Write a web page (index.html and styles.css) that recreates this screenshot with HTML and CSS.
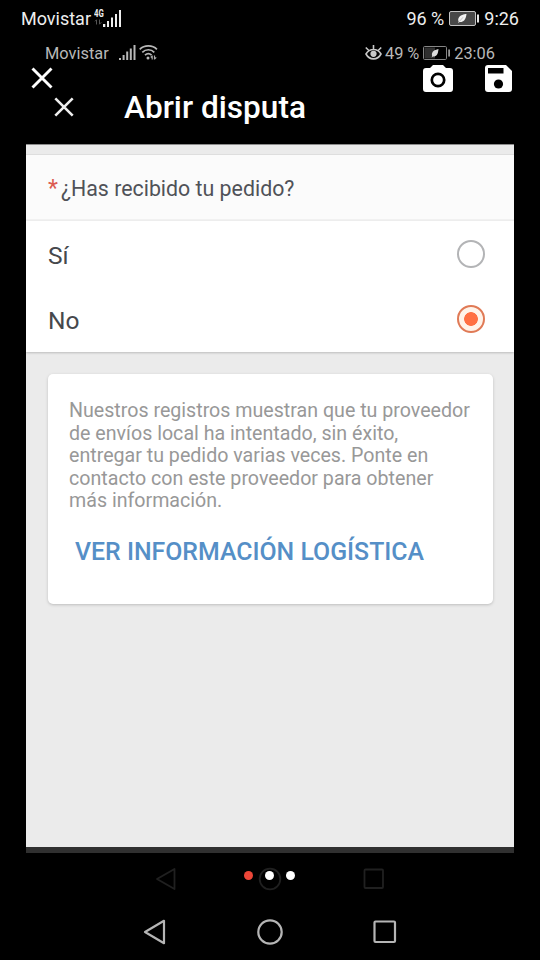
FILE: index.html
```html
<!DOCTYPE html>
<html lang="es">
<head>
<meta charset="utf-8">
<meta name="viewport" content="width=device-width, initial-scale=1">
<title>Abrir disputa</title>
<link rel="stylesheet" href="styles.css">
</head>
<body>
<div class="phone">
  <header class="status">
    <span class="carrier">Movistar</span>
    <span class="network"><b>4G</b><svg width="9" height="6" viewBox="0 0 9 6"><path d="M2.500 5.500V.8M1 2.300 2.500.8M5.500.5v4.700M5.500 5.200 7.300 3.300" fill="none" stroke="#555"/></svg></span>
    <svg class="signal" width="18" height="17" viewBox="0 0 18 17"><path d="M0 14h2.300v3H0zM4 11h2v6H4zM8 7.500h2V17H8zM12 4h2v13h-2zM16 0h2v17h-2z" fill="#eee"/></svg>
    <span class="percent">96 %</span>
    <svg class="battery" width="30" height="15" viewBox="0 0 30 15"><rect x=".5" y=".5" width="26" height="14" rx="1.500" fill="#484848" stroke="#c4c4c4"/><path d="M28 3.500h2v8h-2z" fill="#e5e5e5"/><path d="M17.500 3c-2 0-7 1-8 4.300-.6 1.500-.3 2.500.2 3L9 12l1.600-1c3.500.4 6.200-1.800 6.900-8z" fill="#f2f2f2"/><path d="m10.500 10.300 3.500-4" stroke="#888" stroke-width=".5"/></svg>
    <span class="clock">9:26</span>
  </header>

  <main class="shot">
    <div class="shot-status">
      <span class="carrier">Movistar</span>
      <svg class="signal" width="17" height="15" viewBox="0 0 17 15"><path d="M0 13h2v2H0zM3.600 10h2v5h-2zM7.200 6.500h2V15h-2zM10.800 3.500h2V15h-2zM14.500 0h2v15h-2z" fill="#b8b8b8"/></svg>
      <svg class="wifi" width="19" height="15" viewBox="0 0 19 15"><g fill="none" stroke="#b8b8b8" stroke-width="1.700"><path d="M.7 4.400c4.600-4.600 12.800-4.600 17.200 0M3.300 7.300c3.400-3.400 8.800-3.400 12 0M6 10.200c2-2 4.600-2 6.600 0"/></g><circle cx="9" cy="13" r="1.500" fill="#b8b8b8"/><path d="M13.200 14.500v-4m-1.400 2 1.400-1.700M15.500 10.500v4m0-.3 1.700-1.900" fill="none" stroke="#aaa" stroke-width="1.200"/></svg>
      <svg class="eye" width="17" height="15" viewBox="0 0 17 15"><g fill="none" stroke="#c8c8c8" stroke-width="1.600"><path d="M1 9c3.500-6 11.500-6 15 0-3.500 6.500-11.500 6.500-15 0zM8.500 4V0M3.800 5.500.8 2.500M13.200 5.500l3-3"/></g><circle cx="8.500" cy="8.800" r="3.100" fill="#c8c8c8"/></svg>
      <span class="percent">49 %</span>
      <svg class="battery" width="27" height="14" viewBox="0 0 27 14"><rect x=".5" y=".5" width="23" height="13" rx="1.200" fill="#000" stroke="#858585"/><path d="M1.500 1.500H12v11H1.500z" fill="#303030"/><path d="M25.300 3.500h1.600v7h-1.600z" fill="#aaa"/><path d="M15.500 3C12 3.800 9.500 5 9 7.500c-.2 1 0 2 .2 2.400L8.500 11.500l1.500-1c3.500.2 5-2 5.500-7.500z" fill="#ddd"/></svg>
      <span class="clock">23:06</span>
    </div>
    <div class="titlebar">
      <svg width="20" height="20" viewBox="0 0 20 20"><path d="m1.300 1.300 17.400 17.400M18.700 1.300 1.300 18.700" stroke="#eee" stroke-width="2.600"/></svg>
      <h1>Abrir disputa</h1>
    </div>
    <section class="content">
      <div class="question"><span class="required">*</span><span>¿Has recibido tu pedido?</span></div>
      <div class="options">
        <div class="option"><span>Sí</span><i class="radio"></i></div>
        <div class="option"><span>No</span><i class="radio checked"></i></div>
      </div>
      <article class="card">
        <p>Nuestros registros muestran que tu proveedor<br>de envíos local ha intentado, sin éxito,<br>entregar tu pedido varias veces. Ponte en<br>contacto con este proveedor para obtener<br>más información.</p>
        <a>VER INFORMACIÓN LOGÍSTICA</a>
      </article>
    </section>
    <div class="shot-nav">
      <svg width="22" height="24" viewBox="0 0 22 24"><path d="M19.500 2v20L2 12z"/></svg>
      <svg width="24" height="24" viewBox="0 0 24 24"><circle cx="12" cy="12" r="10.300"/></svg>
      <svg width="22" height="22" viewBox="0 0 22 22"><rect x="1.500" y="1.500" width="18.500" height="18.500" rx="1"/></svg>
    </div>
  </main>

  <nav class="nav">
    <svg width="24" height="26" viewBox="0 0 24 26"><path d="M21 1.800v22.400L2 13z"/></svg>
    <svg width="26" height="26" viewBox="0 0 26 26"><circle cx="13" cy="13" r="11.700"/></svg>
    <svg width="24" height="24" viewBox="0 0 24 24"><rect x="1.500" y="1.500" width="20.500" height="20.500" rx="1"/></svg>
  </nav>

  <div class="tools">
    <svg class="close" width="22" height="22" viewBox="0 0 22 22"><path d="m1.500 1.500 19 19M20.500 1.500l-19 19" stroke="#fff" stroke-width="2.900"/></svg>
    <svg class="camera" width="30" height="27" viewBox="0 0 30 27"><path d="M10 0h10l3 3h4a3 3 0 0 1 3 3v18a3 3 0 0 1-3 3H3a3 3 0 0 1-3-3V6a3 3 0 0 1 3-3h4z" fill="#fff"/><circle cx="15" cy="15" r="6.200" fill="none" stroke="#000" stroke-width="2.700"/></svg>
    <svg class="save" width="27" height="27" viewBox="0 0 27 27"><path d="M3 0h18l6 6v18a3 3 0 0 1-3 3H3a3 3 0 0 1-3-3V3a3 3 0 0 1 3-3z" fill="#fff"/><path d="M3 3h15.500v5.500H3z"/><circle cx="13.500" cy="19" r="4.600"/></svg>
  </div>
  <div class="dots"><i class="active"></i><i></i><i></i></div>
</div>
</body>
</html>
```
FILE: styles.css
```css
* { box-sizing: border-box; }
body { margin: 0; background: #000; font-family: Roboto, sans-serif; }
svg { display: block; flex: none; }
span, a, h1 { white-space: nowrap; }
.phone { position: relative; width: 540px; height: 960px; overflow: hidden; display: flex; flex-direction: column; background: #000; }

.status { height: 37px; flex: none; display: flex; align-items: center; padding: 0 21px; color: #eee; font-size: 18px; }
.network { width: 9px; margin: -4px 0 0 3px; display: flex; flex-direction: column; }
.network b { font: 700 10px/10px Roboto, sans-serif; transform: scale(.78, 1.050); transform-origin: left; }
.status .signal { margin-top: -1px; }
.percent { margin-left: auto; }
.status .battery { margin: 0 5px; }

.shot { margin: 0 26px; height: 867px; flex: none; display: flex; flex-direction: column; }
.shot-status { height: 31px; flex: none; display: flex; align-items: center; padding: 1px 19px 0 19px; font-size: 16.400px; color: #b8b8b8; }
.shot-status .signal { margin-left: 10px; margin-top: -1px; }
.shot-status .wifi { margin-left: 3px; margin-top: -2px; }
.shot-status .eye { margin-left: auto; margin-right: 3px; margin-top: -2px; }
.shot-status .percent { margin-left: 0; letter-spacing: -.1px; }
.shot-status .battery { margin: -1px 4px 0 4px; }
.titlebar { height: 76px; flex: none; display: flex; align-items: center; gap: 50px; padding: 4px 0 0 28px; color: #fff; }
.titlebar svg { margin-top: -2px; }
.titlebar h1 { margin: 0; font-size: 31.600px; line-height: 40px; font-weight: 500; }
.content { height: 709px; flex: none; overflow: hidden; background: #ebebeb; border-top: 1px solid #8c8c8c; border-bottom: 6px solid #303030; padding-top: 9px; }
.question { height: 67px; display: flex; align-items: center; gap: 3px; padding: 2px 22px 0; background: #fbfbfb; border-top: 1px solid #dedede; border-bottom: 2px solid #f1f1f1; color: #505258; font-size: 21.350px; }
.required { color: #dc5a50; font-size: 23px; }
.options { height: 131px; background: #fff; box-shadow: 0 1px 2px #bcbcbc; }
.option { height: 65px; display: flex; align-items: center; justify-content: space-between; padding: 3px 29px 0 22px; color: #46484c; font-size: 24.500px; }
.radio { width: 28px; height: 28px; border: 2.800px solid #b3b4b6; border-radius: 50%; margin-top: -2px; }
.radio.checked { border-color: #e07a56; background: radial-gradient(circle, #ff7043 0 6.500px, #fff3e9 7.200px); }
.card { width: 445px; height: 230px; margin: 22px 0 0 21.500px; padding: 26px 21.500px 0; background: #fff; border-radius: 5px; box-shadow: 0 1px 3px #bdbdbd; }
.card p { margin: 0; color: #989898; font-size: 19.640px; line-height: 22.600px; white-space: nowrap; }
.card a { display: block; margin: 24px 0 0 6px; color: #558fc7; font-size: 24.850px; line-height: 30px; font-weight: 500; }

.shot-nav, .nav { display: flex; align-items: center; justify-content: center; }
.shot-nav svg, .nav svg { fill: none; stroke-linejoin: round; }
.shot-nav { flex: 1; gap: 81px; stroke: #202020; stroke-width: 1.800; }
.nav { flex: 1; gap: 90px; stroke: #b5b5b5; stroke-width: 2.200; }

.tools { position: absolute; left: 31px; right: 28.500px; top: 65px; display: flex; align-items: center; }
.tools .close { margin-top: -2px; }
.tools .camera { margin-left: auto; margin-right: 31.500px; margin-top: -1px; }
.dots { position: absolute; left: 244.400px; top: 871px; display: flex; gap: 12px; }
.dots i { width: 9px; height: 9px; border-radius: 50%; background: #fff; }
.dots .active { background: #ec4638; }
```
